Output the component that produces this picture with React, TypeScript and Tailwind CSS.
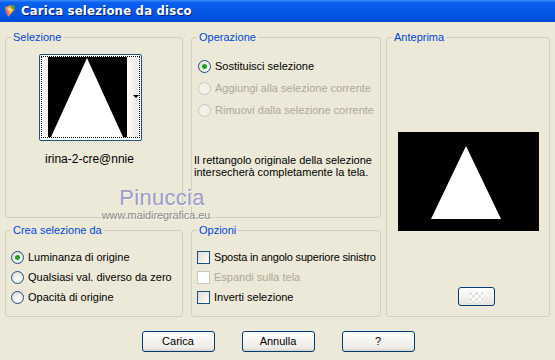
import React from "react";

function Radio({ checked, disabled }: { checked?: boolean; disabled?: boolean }) {
  return (
    <span
      className={
        "relative inline-flex w-[13px] h-[13px] rounded-full border shrink-0 items-center justify-center " +
        (disabled
          ? "border-[#cac8bb] bg-[#f2f1ea]"
          : "border-[#1c5180] bg-[radial-gradient(circle_at_65%_65%,#ffffff,#dcdad0)]")
      }
    >
      {checked && <span className="w-[5px] h-[5px] rounded-full bg-[#21a121]" />}
    </span>
  );
}

function Check({ disabled }: { disabled?: boolean }) {
  return (
    <span
      className={
        "inline-block w-[13px] h-[13px] border shrink-0 " +
        (disabled
          ? "border-[#cac8bb] bg-white"
          : "border-[#1c5180] bg-[linear-gradient(135deg,#dcdad0,#ffffff)]")
      }
    />
  );
}

function Group({ title, className, children }: { title: string; className?: string; children?: React.ReactNode }) {
  return (
    <fieldset className={"border border-[#d0d0bf] rounded-[3px] min-w-0 " + (className ?? "")}>
      <legend className="ml-[5px] px-[2px] text-[#0046d5] leading-[13px]">{title}</legend>
      {children}
    </fieldset>
  );
}

function Btn({ children }: { children: React.ReactNode }) {
  return (
    <button className="w-[73px] h-[21px] rounded-[3px] border border-[#003c74] bg-[linear-gradient(#ffffff,#ecebe6_85%,#d6d0c5)] text-black leading-none">
      {children}
    </button>
  );
}

export default function App() {
  return (
    <div className="w-[555px] h-[360px] bg-[#ece9d8] overflow-hidden text-[11px] text-black font-['Liberation_Sans',Arial,sans-serif] relative whitespace-nowrap">
      {/* title bar */}
      <div className="h-[22px] flex items-center gap-[4px] pl-[3px] bg-[linear-gradient(#3b8cf5,#0a5fee_12%,#0055e5_70%,#0048d0)]">
        <svg width="14" height="14" viewBox="0 0 14 14">
          <path d="M2 3 L8 1 L12 5 L9 9 L5 13 L3 9 Z" fill="#e88a3a" />
          <path d="M4 4 L8 3 L10 6 L7 9 Z" fill="#f7d36b" />
          <circle cx="10" cy="3" r="2" fill="#3ca44a" />
          <path d="M1 8 L4 7 L5 12 Z" fill="#8a4fc8" />
        </svg>
        <span className="text-white font-bold text-[13px] tracking-[0.2px] font-['DejaVu_Sans_Condensed','DejaVu_Sans',sans-serif] [text-shadow:1px_1px_#0a1f80]">
          Carica selezione da disco
        </span>
      </div>

      <div className="px-[5px] pt-[9px]">
        <div className="flex gap-[5px]">
          <div className="grid grid-cols-[178px_190px] grid-rows-[187px_93px] gap-x-[8px] gap-y-[6px]">
            <Group title="Selezione">
              <div className="pl-[33px] pt-[10px]">
                <div className="w-[103px] h-[87px] border border-[#1c5180] rounded-[2px] bg-white px-[1px] pt-[1px] pb-[2px]">
                  <div className="w-full h-full border border-dotted border-black flex pl-[6px]">
                    <svg width="79" height="80" viewBox="0 0 79 80" className="block">
                      <rect width="79" height="80" fill="#000" />
                      <polygon points="39,1 75,80 3,80" fill="#fff" />
                    </svg>
                    <div className="w-[11px] mr-[1px] relative bg-[linear-gradient(90deg,#ffffff,#e8e6dc)]">
                      <span className="absolute right-[-1px] top-[38px] w-0 h-0 border-l-[3px] border-r-[3px] border-t-[3px] border-l-transparent border-r-transparent border-t-black" />
                    </div>
                  </div>
                </div>
                <div className="w-[101px] text-center mt-[9px] text-[12px]">irina-2-cre@nnie</div>
              </div>
            </Group>

            <Group title="Operazione">
              <div className="pl-[6px] pt-[16px] flex flex-col gap-[9px]">
                <div className="flex items-center gap-[4px] h-[13px]"><Radio checked /><span>Sostituisci selezione</span></div>
                <div className="flex items-center gap-[4px] h-[13px] text-[#aca899]"><Radio disabled /><span>Aggiungi alla selezione corrente</span></div>
                <div className="flex items-center gap-[4px] h-[13px] text-[#aca899]"><Radio disabled /><span>Rimuovi dalla selezione corrente</span></div>
              </div>
              <p className="pl-[2px] mt-[37px] leading-[12px]">
                Il rettangolo originale della selezione<br />intersecherà completamente la tela.
              </p>
            </Group>

            <Group title="Crea selezione da">
              <div className="pl-[5px] pt-[14px] flex flex-col gap-[7px]">
                <div className="flex items-center gap-[4px] h-[13px]"><Radio checked /><span>Luminanza di origine</span></div>
                <div className="flex items-center gap-[4px] h-[13px]"><Radio /><span>Qualsiasi val. diverso da zero</span></div>
                <div className="flex items-center gap-[4px] h-[13px]"><Radio /><span>Opacità di origine</span></div>
              </div>
            </Group>

            <Group title="Opzioni">
              <div className="pl-[5px] pt-[14px] flex flex-col gap-[7px]">
                <div className="flex items-center gap-[4px] h-[13px]"><Check /><span className="tracking-[-0.2px]">Sposta in angolo superiore sinistro</span></div>
                <div className="flex items-center gap-[4px] h-[13px] text-[#aca899]"><Check disabled /><span>Espandi sulla tela</span></div>
                <div className="flex items-center gap-[4px] h-[13px]"><Check /><span>Inverti selezione</span></div>
              </div>
            </Group>
          </div>

          <Group title="Anteprima" className="w-[164px] h-[286px] flex flex-col items-center">
            <svg width="141" height="99" viewBox="0 0 141 99" className="mt-[88px] block">
              <rect width="141" height="99" fill="#000" />
              <polygon points="68,14 103,87 33,87" fill="#fff" />
            </svg>
            <div className="mt-[56px] ml-[16px] w-[37px] h-[19px] rounded-[3px] border border-[#003c74] bg-[linear-gradient(#ffffff,#e6e4dc)] flex items-center justify-center">
              <span className="w-[14px] h-[10px] bg-[conic-gradient(#fff_25%,#e2e2e2_0_50%,#fff_0_75%,#e2e2e2_0)] bg-[length:6px_6px]" />
            </div>
          </Group>
        </div>

        <div className="flex justify-center gap-[27px] mt-[14px] pl-[1px]">
          <Btn>Carica</Btn>
          <Btn>Annulla</Btn>
          <Btn>?</Btn>
        </div>
      </div>

      {/* watermark */}
      <div className="absolute left-[97px] top-[186px] w-[118px] text-center pointer-events-none">
        <div className="pl-[12px] text-[22px] leading-[23px] text-[#9d9dc2] tracking-[0.3px] [text-shadow:1px_1px_#f4f4fa]">Pinuccia</div>
        <div className="text-[11px] leading-[12px] text-[#8c8c8c] tracking-[-0.1px] [text-shadow:1px_1px_#f7f7f2]">www.maidiregrafica.eu</div>
      </div>
    </div>
  );
}
